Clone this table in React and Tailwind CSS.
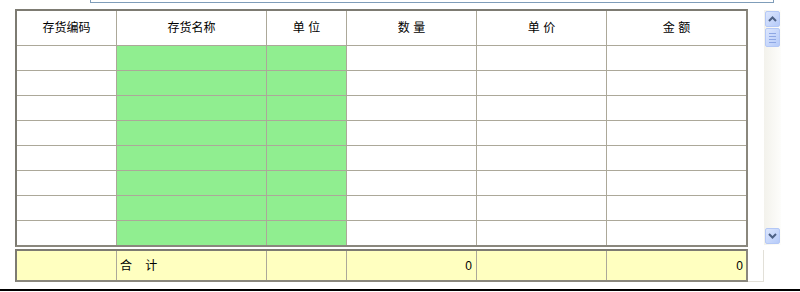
import React from 'react';

const cols = [
  { title: '存货编码', w: 'w-[100px]' },
  { title: '存货名称', w: 'w-[150px]', fill: true },
  { title: '单 位', w: 'w-[80px]', fill: true },
  { title: '数 量', w: 'w-[130px]' },
  { title: '单 价', w: 'w-[130px]' },
  { title: '金 额', w: 'w-[139px]', last: true },
];

const ROWS = 8;

const Chevron = ({ down }) => (
  <svg width="9" height="6" viewBox="0 0 9 6">
    <path
      d={down ? 'M1 1 L4.5 4.5 L8 1' : 'M1 5 L4.5 1.5 L8 5'}
      fill="none"
      stroke="#4d6185"
      strokeWidth="2"
    />
  </svg>
);

const ScrollButton = ({ children, className = '' }) => (
  <div
    className={`w-[15px] h-[16px] mx-auto rounded-[2px] border border-[#b4c8f6] bg-gradient-to-br from-[#dce6fd] to-[#b6cbf9] flex items-center justify-center ${className}`}
  >
    {children}
  </div>
);

const Scrollbar = () => (
  <div className="ml-[16px] mt-[1px] w-[17px] h-[235px] bg-gradient-to-r from-[#f3f2ec] to-[#fdfdfb] flex flex-col py-[1px]">
    <ScrollButton>
      <Chevron />
    </ScrollButton>
    <ScrollButton className="mt-[1px] h-[19px]">
      {/* grip lines on the thumb */}
      <div className="flex flex-col gap-[2px]">
        <div className="w-[7px] h-[1px] bg-[#8ea7e4]" />
        <div className="w-[7px] h-[1px] bg-[#8ea7e4]" />
        <div className="w-[7px] h-[1px] bg-[#8ea7e4]" />
        <div className="w-[7px] h-[1px] bg-[#8ea7e4]" />
      </div>
    </ScrollButton>
    <div className="flex-1" />
    <ScrollButton>
      <Chevron down />
    </ScrollButton>
  </div>
);

export default function App() {
  return (
    <div className="w-[800px] h-[292px] bg-white flex flex-col text-[12px] leading-none text-black font-['Liberation_Sans','Noto_Sans_CJK_SC',sans-serif]">
      {/* bottom edge of the search input above the grid */}
      <div className="ml-[90px] w-[684px] h-[3px] border-x border-b border-[#7f9db9]" />

      <div className="mt-[6px] flex items-start">
        <div className="ml-[15px] w-[733px] border-2 border-[#8a877d] border-t-[#7d7b72] border-l-[#7d7b72]">
          {/* header */}
          <div className="flex h-[35px] border-b border-[#aca899]">
            {cols.map((c) => (
              <div
                key={c.title}
                className={`${c.w} flex items-center justify-center ${c.last ? '' : 'border-r border-[#aca899]'}`}
              >
                {c.title}
              </div>
            ))}
          </div>
          {/* body rows */}
          {Array.from({ length: ROWS }).map((_, r) => (
            <div
              key={r}
              className={`flex ${r < ROWS - 1 ? 'h-[25px] border-b border-[#aca899]' : 'h-[24px]'}`}
            >
              {cols.map((c) => (
                <div
                  key={c.title}
                  className={`${c.w} ${c.fill ? 'bg-[#90ee90]' : 'bg-white'} ${c.last ? '' : 'border-r border-[#aca899]'}`}
                />
              ))}
            </div>
          ))}
        </div>
        <Scrollbar />
      </div>

      {/* totals row */}
      <div className="mt-[2px] flex items-start">
        <div className="ml-[15px] w-[733px] h-[33px] border-2 border-[#8a877d] border-t-[#7d7b72] border-l-[#7d7b72] bg-[#ffffc0] flex">
          <div className="w-[100px] border-r border-[#aca899]" />
          <div className="w-[150px] border-r border-[#aca899] flex items-center pl-[3px] tracking-[5px]">
            合 计
          </div>
          <div className="w-[80px] border-r border-[#aca899]" />
          <div className="w-[130px] border-r border-[#aca899] flex items-center justify-end pr-[4px]">
            0
          </div>
          <div className="w-[130px] border-r border-[#aca899]" />
          <div className="w-[139px] flex items-center justify-end pr-[3px]">0</div>
        </div>
        <div className="w-[16px] h-[32px] mt-[1px] border-r border-b border-[#e2e0d8]" />
      </div>

      <div className="mt-auto mb-[1px] h-[2px] bg-black" />
    </div>
  );
}
